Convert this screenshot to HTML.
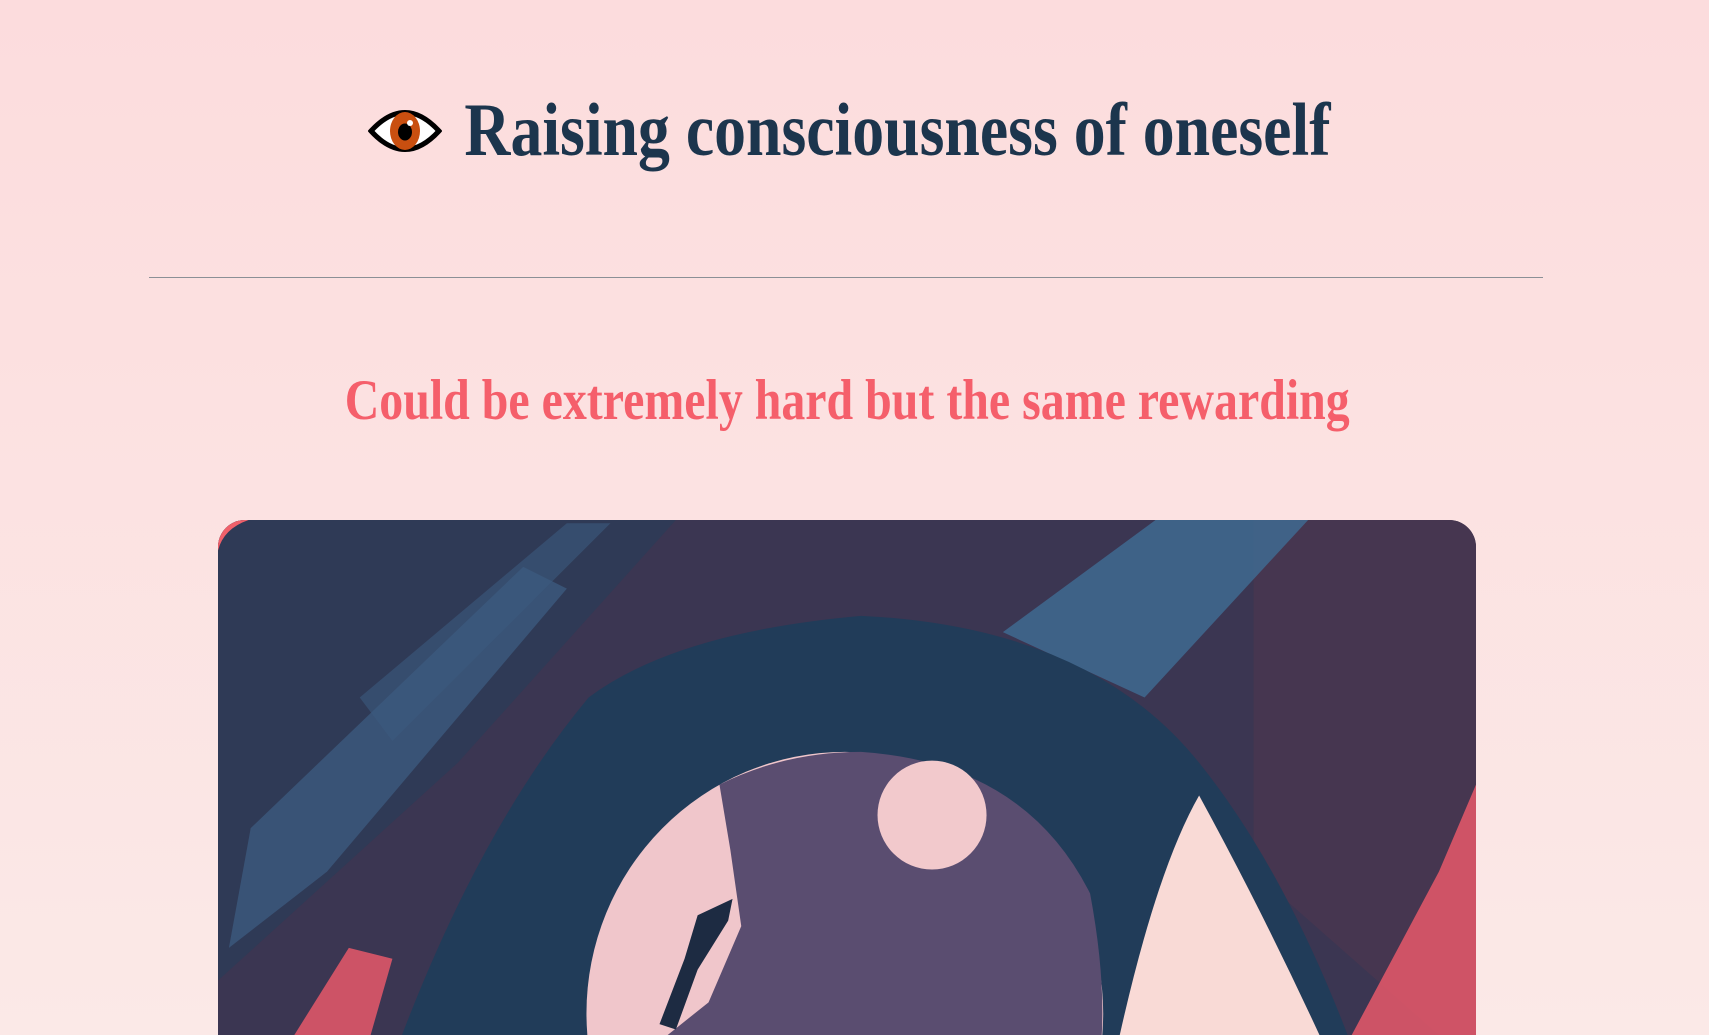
<!DOCTYPE html>
<html><head><meta charset="utf-8"><style>
html,body{margin:0;padding:0;overflow:hidden;width:1709px;height:1035px}
body{position:relative;background:linear-gradient(#fcdcdd,#fbe9e7);font-family:"Liberation Serif",serif}
.t{position:absolute;left:0;width:1709px;text-align:center;white-space:nowrap;font-weight:bold}
.t span{display:inline-block;transform-origin:center}
#h1{top:86px;font-size:75px;color:#1c354d;line-height:90px}
#h1 span{margin-left:86px;transform:scaleX(0.85)}
#eye{position:absolute;left:368px;top:102px}
hr{position:absolute;left:149px;top:277px;width:1394px;margin:0;border:0;border-top:1.5px solid #8b9096}
#h2{top:366px;font-size:57px;color:#f55f6b;line-height:70px}
#h2 span{transform:scaleX(0.84);margin-right:14px}
#img{position:absolute;left:218px;top:520px;width:1258px;height:515px;border-radius:27px 27px 0 0;overflow:hidden}
</style></head><body>
<svg id="eye" width="74" height="58" viewBox="0 0 74 58">
<path d="M3 29 Q37 -8 71 29 Q37 66 3 29Z" fill="#fff" stroke="#000" stroke-width="5"/>
<ellipse cx="37" cy="29" rx="15" ry="19" fill="#c94f10"/>
<ellipse cx="37" cy="30" rx="7" ry="8.5" fill="#000"/>
<circle cx="42" cy="21" r="3" fill="#fff"/>
</svg>
<div class="t" id="h1"><span>Raising consciousness of oneself</span></div>
<hr>
<div class="t" id="h2"><span>Could be extremely hard but the same rewarding</span></div>
<div id="img">
<svg width="1258" height="515" viewBox="200 477 1154 473" preserveAspectRatio="none">
<rect x="200" y="477" width="1154" height="480" fill="#3b3652"/>
<path d="M200 477 L620 477 L420 700 L200 900Z" fill="#2f3a56"/>
<path d="M1150 477 L1354 477 L1354 980 L1150 800Z" fill="#463650"/>
<path d="M230 760 L480 520 L520 540 L300 800 L210 870Z" fill="#3c5a7e" opacity=".8"/>
<path d="M330 640 L520 480 L560 480 L360 680Z" fill="#3c5a7e" opacity=".6"/>
<path d="M920 580 L1060 477 L1200 477 L1050 640Z" fill="#3f6a90" opacity=".85"/>
<path d="M200 477 L228 477 Q205 485 200 505Z" fill="#f0606a"/>
<path d="M1354 720 L1354 950 L1240 950 L1320 800Z" fill="#e8586a" opacity=".85"/>
<path d="M270 950 L320 870 L360 880 L340 950Z" fill="#e8586a" opacity=".85"/>
<path d="M365 960 Q440 760 540 640 Q620 580 790 565 Q1000 575 1100 700 Q1180 800 1240 960Z" fill="#213c59"/>
<path d="M1025 960 Q1060 800 1100 730 Q1160 840 1215 960Z" fill="#f9dad6"/>
<ellipse cx="775" cy="930" rx="237" ry="240" fill="#f0c6cb"/>
<path d="M660 720 Q720 690 790 690 Q940 700 1000 820 Q1015 900 1010 960 L600 960 L650 920 L680 850 L670 780Z" fill="#5a4d70"/>
<circle cx="855" cy="748" r="50" fill="#f2c9cc"/>
<path d="M640 840 L672 825 L668 845 L640 890 L620 945 L605 940 L628 880Z" fill="#1d2b42"/>
</svg>
</div>
</body></html>
